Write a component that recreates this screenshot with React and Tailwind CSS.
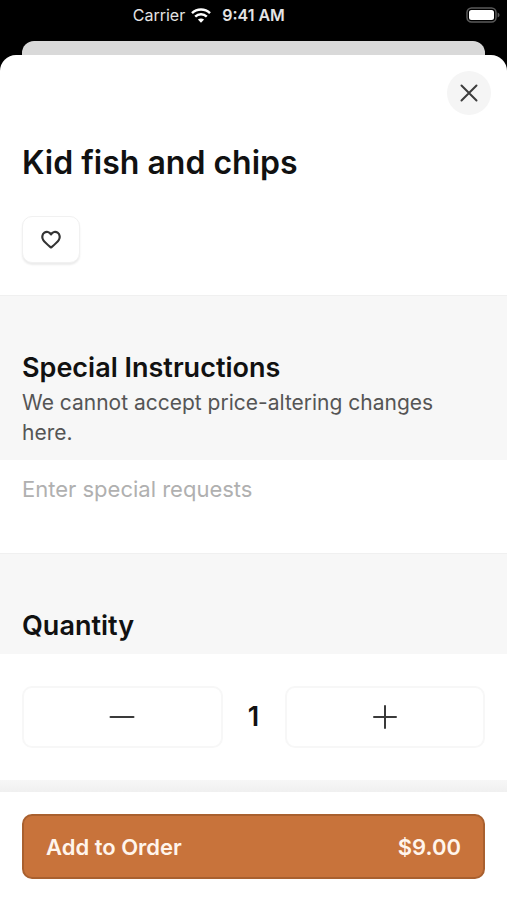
import { useState } from "react";

const PRICE = 9;

export default function App() {
  const [quantity, setQuantity] = useState(1);
  const [favorite, setFavorite] = useState(false);

  return (
    <div className="flex min-h-screen flex-col bg-black font-['Inter',sans-serif] text-[#111111]">
      <StatusBar />

      {/* edge of the sheet underneath */}
      <div className="mx-[22px] h-[14px] rounded-t-[12px] bg-[#d9d9d9]" />

      <main className="flex flex-1 flex-col rounded-t-[16px] bg-white">
        <header className="px-[22px] pb-8">
          <div className="-mr-[6px] flex justify-end pt-4">
            <button
              type="button"
              aria-label="Close"
              className="flex h-11 w-11 items-center justify-center rounded-full bg-[#f5f5f5] text-[#3d3d3d]"
            >
              <svg width="18" height="18" viewBox="0 0 18 18" fill="none" stroke="currentColor" strokeWidth="2" strokeLinecap="round">
                <path d="M1.5 1.5l15 15M16.5 1.5l-15 15" />
              </svg>
            </button>
          </div>

          <h1 className="mt-7 text-[32px] leading-10 font-semibold">
            Kid fish and chips
          </h1>

          <button
            type="button"
            aria-label="Add to favorites"
            aria-pressed={favorite}
            onClick={() => setFavorite(!favorite)}
            className="mt-[33px] flex h-[47px] w-[58px] items-center justify-center rounded-[10px] border border-[#f1f1f1] bg-white text-[#333333] shadow-[0_2px_2px_rgba(0,0,0,0.08)]"
          >
            <svg
              width="22"
              height="20"
              viewBox="0 0 22 20"
              fill={favorite ? "currentColor" : "none"}
              stroke="currentColor"
              strokeWidth="2.2"
              strokeLinejoin="round"
            >
              <path d="M11 4.4C9.4 1.6 6.4 1.3 4.4 2.7C2.1 4.3 1.6 7.6 3.2 10C4.8 12.5 8.2 15.2 11 17.5C13.8 15.2 17.2 12.5 18.8 10C20.4 7.6 19.9 4.3 17.6 2.7C15.6 1.3 12.6 1.6 11 4.4Z" />
            </svg>
          </button>
        </header>

        <SectionHeading
          id="instructions"
          title="Special Instructions"
          note="We cannot accept price-altering changes here."
        />
        <textarea
          aria-labelledby="instructions"
          placeholder="Enter special requests"
          className="block h-[93px] w-full resize-none bg-white px-[22px] pt-[14px] text-[22px] leading-[30px] outline-none placeholder:text-[#b0b0b0]"
        />

        <SectionHeading id="quantity" title="Quantity" />
        <div
          role="group"
          aria-labelledby="quantity"
          className="grid grid-cols-[1fr_62px_1fr] items-center px-[22px] py-8"
        >
          <StepButton
            label="Decrease quantity"
            path="M1.5 13h23"
            onClick={() => setQuantity(Math.max(1, quantity - 1))}
          />
          <output className="text-center text-[27px] leading-10 font-semibold">
            {quantity}
          </output>
          <StepButton
            label="Increase quantity"
            path="M2 13h22M13 2v22"
            onClick={() => setQuantity(quantity + 1)}
          />
        </div>

        <div className="h-3 bg-linear-to-b from-[#f7f7f7] to-[#f0f0f0]" />

        <footer className="bg-white px-[22px] pt-[22px] pb-5">
          <button
            type="button"
            className="flex h-[65px] w-full items-center justify-between rounded-[10px] border-2 border-[#a9602f] bg-[#c8733b] px-[22px] text-[22px] leading-[30px] font-semibold text-[#fff5ec]"
          >
            <span>Add to Order</span>
            <span>${(PRICE * quantity).toFixed(2)}</span>
          </button>
        </footer>
      </main>
    </div>
  );
}

function StatusBar() {
  return (
    <div className="grid h-[41px] grid-cols-[1fr_auto_1fr] items-start pt-[5px] text-[16px] leading-5 text-[#e4e4e4]">
      <div className="flex items-center justify-end gap-[6px] pr-[11px]">
        <span>Carrier</span>
        <svg width="20" height="15" viewBox="0 0 20 15" fill="none" stroke="#ffffff" strokeWidth="2.5">
          <path d="M1 5.2C6 0.4 14 0.4 19 5.2" />
          <path d="M4.2 8.6C7.5 5.5 12.5 5.5 15.8 8.6" />
          <path d="M10 14.8L6.9 11.6C8.6 10 11.4 10 13.1 11.6Z" fill="#ffffff" stroke="none" />
        </svg>
      </div>
      <span className="font-semibold">9:41 AM</span>
      <div className="flex h-5 items-center justify-end pr-[7px]">
        <svg width="34" height="16" viewBox="0 0 34 16" fill="none">
          <rect x="1" y="1" width="29" height="14" rx="4.5" stroke="#5a5a5a" strokeWidth="1.5" />
          <rect x="3" y="3" width="25" height="10" rx="2.5" fill="#ffffff" />
          <path d="M31.6 5.5v5c1.2-.5 1.9-1.4 1.9-2.5s-.7-2-1.9-2.5z" fill="#5a5a5a" />
        </svg>
      </div>
    </div>
  );
}

function SectionHeading({ id, title, note }) {
  return (
    <div className="border-t border-[#f0f0f0] bg-[#f7f7f7] px-[22px] pt-[52px] pb-2">
      <h2 id={id} className="text-[27px] leading-10 font-semibold">
        {title}
      </h2>
      {note && (
        <p className="pb-1 text-[21px] leading-[30px] text-[#555555]">{note}</p>
      )}
    </div>
  );
}

function StepButton({ label, path, onClick }) {
  return (
    <button
      type="button"
      aria-label={label}
      onClick={onClick}
      className="flex h-[62px] items-center justify-center rounded-[10px] border-2 border-[#f7f7f7] bg-white text-[#3a3a3a]"
    >
      <svg width="26" height="26" viewBox="0 0 26 26" fill="none" stroke="currentColor" strokeWidth="2" strokeLinecap="round">
        <path d={path} />
      </svg>
    </button>
  );
}
